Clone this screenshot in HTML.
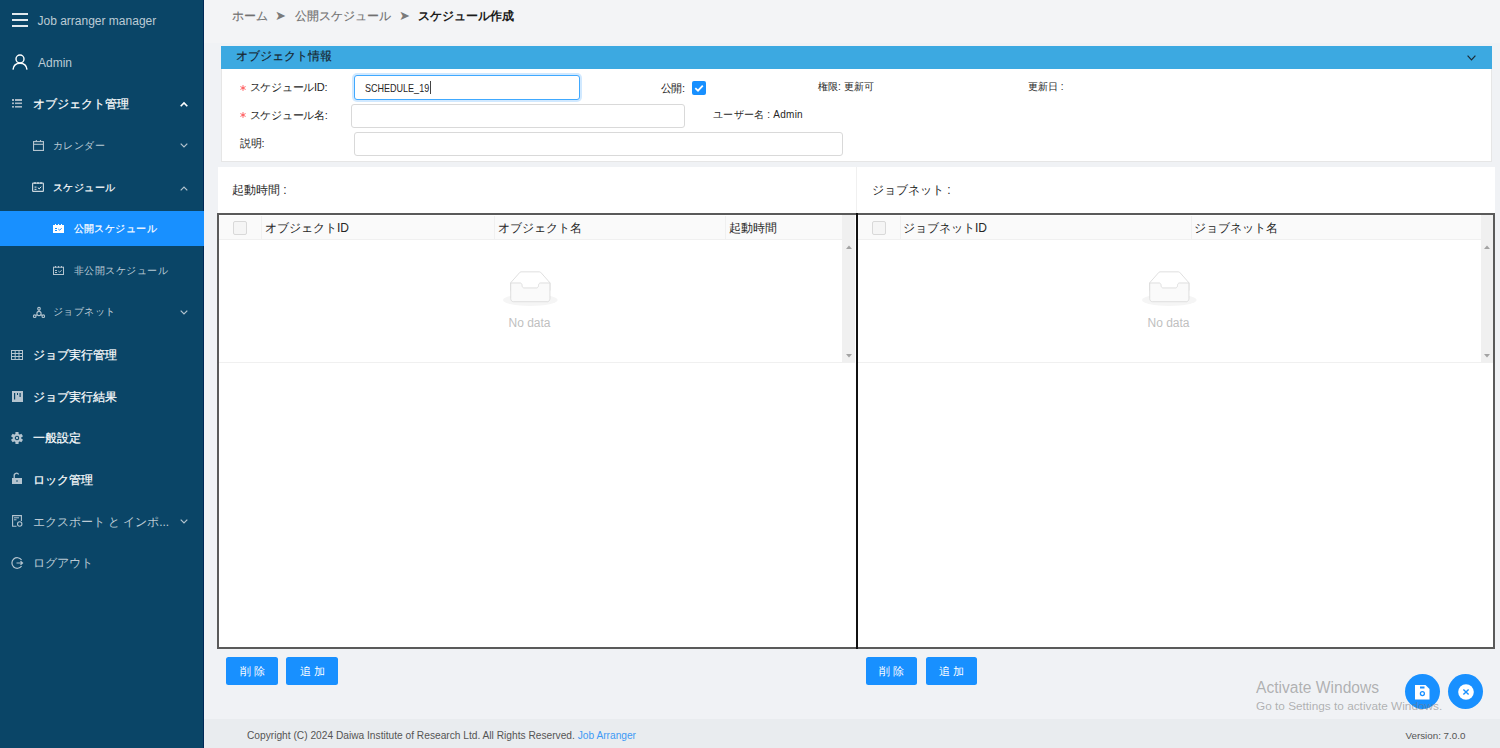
<!DOCTYPE html>
<html><head><meta charset="utf-8">
<style>
*{box-sizing:border-box}
html,body{margin:0;padding:0}
body{width:1500px;height:748px;overflow:hidden;position:relative;background:#f0f2f5;font-family:"Liberation Sans",sans-serif;color:#262626}
.a{position:absolute;white-space:nowrap;line-height:20px}
svg{position:absolute;overflow:visible}
#side{position:absolute;left:0;top:0;width:204px;height:748px;background:#0a4567;border-right:1px solid #002957}
.sw{color:#fff;-webkit-text-stroke:0.2px #fff}
.sg{color:#bccbd5}
.t12{font-size:12px}
.t11{font-size:10px;letter-spacing:0.45px}
#hdr{position:absolute;left:204px;top:0;width:1296px;height:43px;background:#f3f4f6}
#card{position:absolute;left:221px;top:46px;width:1270.5px;height:115.5px;background:#fff;border:1px solid #e6e6e6;border-top:none;border-radius:0}
#cardh{position:absolute;left:221px;top:46px;width:1270.5px;height:22.5px;background:#3ca9e1;border-radius:0}
.inp{position:absolute;background:#fff;border:1px solid #d9d9d9;border-radius:3px}
.lbl{font-size:11px;color:#262626;letter-spacing:-0.25px}
.lb2{font-size:10px;color:#262626}
.req{color:#f5222d;font-size:11px}
.panel{position:absolute;background:#fff}
.tbl{position:absolute;border:2px solid #5a5a5a}
.th{position:absolute;background:#fafafa}
.cb{position:absolute;width:14px;height:14px;border:1px solid #d9d9d9;background:#f5f5f5;border-radius:2px}
.vd{position:absolute;width:1px;background:#f0f0f0}
.sb{position:absolute;background:#f0f0f0}
.btn{position:absolute;top:657px;height:28px;background:#1890ff;border-radius:2.5px;color:#fff;font-size:11px;line-height:28px;text-align:center;letter-spacing:3px;text-indent:3px}
.nod{font-size:12px;color:#bfbfbf}
#foot{position:absolute;left:204px;top:718.5px;width:1296px;height:30px;background:#e9ecef}
.fab{position:absolute;width:35px;height:35px;border-radius:50%;background:#1890ff}
</style></head><body>

<div id="side"></div>
<!-- hamburger -->
<div style="position:absolute;left:12px;top:12.5px;width:16px;height:2px;background:#e2e9ee"></div>
<div style="position:absolute;left:12px;top:18.5px;width:16px;height:2px;background:#e2e9ee"></div>
<div style="position:absolute;left:12px;top:24.5px;width:16px;height:2px;background:#e2e9ee"></div>
<div class="a sg" style="left:37.5px;top:11px;font-size:12px">Job arranger manager</div>
<!-- admin -->
<svg style="left:12px;top:54px" width="16" height="16" viewBox="0 0 16 16"><circle cx="8" cy="5" r="4" fill="none" stroke="#fff" stroke-width="1.4"/><path d="M1 15.6 C1.5 11 4.5 9.3 8 9.3 C11.5 9.3 14.5 11 15 15.6" fill="none" stroke="#fff" stroke-width="1.4"/></svg>
<div class="a sg" style="left:38px;top:53px;font-size:12px">Admin</div>

<!-- object mgmt -->
<svg style="left:12px;top:99px" width="11" height="9" viewBox="0 0 11 9"><g fill="#a9b9c6"><rect x="0" y="0" width="2" height="2"/><rect x="3" y="0" width="7" height="2"/><rect x="0" y="3.5" width="2" height="1.6"/><rect x="3" y="3.5" width="7" height="1.6"/><rect x="0" y="7" width="2" height="1.6"/><rect x="3" y="7" width="7" height="1.6"/></g></svg>
<div class="a sw t12" style="left:32.5px;top:93.5px">オブジェクト管理</div>
<svg style="left:180px;top:102px" width="8" height="5" viewBox="0 0 8 5"><path d="M0.7 4.3 L4 1 L7.3 4.3" fill="none" stroke="#fff" stroke-width="1.6"/></svg>

<!-- calendar -->
<svg style="left:33px;top:140px" width="11" height="11" viewBox="0 0 11 11"><g fill="none" stroke="#b4c4cf" stroke-width="1.1"><rect x="0.55" y="1.6" width="9.9" height="8.85"/><line x1="0.5" y1="4.3" x2="10.5" y2="4.3"/><line x1="3.3" y1="0" x2="3.3" y2="2"/><line x1="7.5" y1="0" x2="7.5" y2="2"/></g></svg>
<div class="a sg t11" style="left:53px;top:135.5px">カレンダー</div>
<svg style="left:180px;top:142.5px" width="8" height="5" viewBox="0 0 8 5"><path d="M0.7 0.7 L4 4 L7.3 0.7" fill="none" stroke="#b4c4cf" stroke-width="1.2"/></svg>

<!-- schedule -->
<svg style="left:32px;top:182px" width="12" height="10" viewBox="0 0 12 10"><g fill="none" stroke="#c8d4dc" stroke-width="1.2"><rect x="0.6" y="1.2" width="10.8" height="8.2" rx="0.6"/></g><g fill="#e8eef2"><rect x="2.5" y="0" width="1" height="2"/><rect x="5.5" y="0" width="1" height="2"/><rect x="8.5" y="0" width="1" height="2"/><rect x="2.5" y="4.6" width="2" height="1"/><rect x="2.5" y="6.8" width="2" height="1"/></g><path d="M5.8 5.6 L7.2 6.9 L9.2 4.7" fill="none" stroke="#e8eef2" stroke-width="1"/></svg>
<div class="a sw t11" style="left:53px;top:177.5px">スケジュール</div>
<svg style="left:180px;top:186px" width="8" height="5" viewBox="0 0 8 5"><path d="M0.7 4.3 L4 1 L7.3 4.3" fill="none" stroke="#b4c4cf" stroke-width="1.2"/></svg>

<!-- selected -->
<div style="position:absolute;left:0;top:211px;width:204px;height:35px;background:#1890ff"></div>
<svg style="left:53px;top:224px" width="11" height="9" viewBox="0 0 11 9"><rect x="0" y="1" width="11" height="8" fill="#fff"/><g fill="#fff"><rect x="2" y="0" width="1" height="1.5"/><rect x="5" y="0" width="1" height="1.5"/><rect x="8" y="0" width="1" height="1.5"/></g><g fill="#1890ff"><rect x="2" y="4" width="2" height="1"/><rect x="2" y="6" width="2" height="1"/></g><path d="M5.3 5 L6.6 6.2 L8.6 4.2" fill="none" stroke="#1890ff" stroke-width="1"/></svg>
<div class="a sw t11" style="left:73.5px;top:218.5px">公開スケジュール</div>

<!-- private -->
<svg style="left:53px;top:266px" width="11" height="9" viewBox="0 0 11 9"><g fill="none" stroke="#b4c4cf" stroke-width="1"><rect x="0.5" y="1.2" width="10" height="7.3"/></g><g fill="#b4c4cf"><rect x="2" y="0" width="1" height="1.6"/><rect x="5" y="0" width="1" height="1.6"/><rect x="8" y="0" width="1" height="1.6"/><rect x="2" y="4" width="2" height="1"/><rect x="2" y="6" width="2" height="1"/></g><path d="M5.3 5 L6.6 6.2 L8.6 4.2" fill="none" stroke="#b4c4cf" stroke-width="1"/></svg>
<div class="a sg t11" style="left:74px;top:260.5px">非公開スケジュール</div>

<!-- jobnet -->
<svg style="left:32.5px;top:307px" width="12" height="11" viewBox="0 0 12 11"><g fill="none" stroke="#b4c4cf" stroke-width="1.1"><circle cx="6" cy="1.7" r="1.3"/><circle cx="6" cy="6.5" r="2.1"/><circle cx="1.7" cy="9.2" r="1.3"/><circle cx="10.3" cy="9.2" r="1.3"/><line x1="6" y1="3" x2="6" y2="4.4"/><line x1="2.8" y1="8.5" x2="4.2" y2="7.6"/><line x1="9.2" y1="8.5" x2="7.8" y2="7.6"/></g></svg>
<div class="a sg t11" style="left:53px;top:302px">ジョブネット</div>
<svg style="left:180px;top:309.5px" width="8" height="5" viewBox="0 0 8 5"><path d="M0.7 0.7 L4 4 L7.3 0.7" fill="none" stroke="#b4c4cf" stroke-width="1.2"/></svg>

<!-- job exec mgmt -->
<svg style="left:11px;top:349.5px" width="12" height="10" viewBox="0 0 12 10"><g fill="none" stroke="#b4c4cf" stroke-width="1"><rect x="0.5" y="0.5" width="11" height="9"/><line x1="4.2" y1="0" x2="4.2" y2="10"/><line x1="8" y1="0" x2="8" y2="10"/><line x1="0" y1="3.5" x2="12" y2="3.5"/><line x1="0" y1="6.5" x2="12" y2="6.5"/></g></svg>
<div class="a sw t12" style="left:33px;top:345px">ジョブ実行管理</div>

<!-- job exec result -->
<svg style="left:11.5px;top:390.5px" width="11" height="11" viewBox="0 0 11 11"><rect x="0" y="0" width="11" height="11" fill="#b4c4cf"/><rect x="2" y="2" width="1.2" height="6.5" fill="#0a4567"/><rect x="5" y="2" width="1" height="2" fill="#0a4567"/><rect x="7.5" y="2" width="1.2" height="4" fill="#0a4567"/></svg>
<div class="a sw t12" style="left:33px;top:387px">ジョブ実行結果</div>

<!-- general settings -->
<svg style="left:11px;top:431.5px" width="12" height="12" viewBox="0 0 12 12"><g fill="#b4c4cf" transform="translate(6 6)"><circle r="4.3"/><rect x="-1.6" y="-6" width="3.2" height="3" rx="0.6"/><rect x="-1.6" y="-6" width="3.2" height="3" rx="0.6" transform="rotate(60)"/><rect x="-1.6" y="-6" width="3.2" height="3" rx="0.6" transform="rotate(120)"/><rect x="-1.6" y="-6" width="3.2" height="3" rx="0.6" transform="rotate(180)"/><rect x="-1.6" y="-6" width="3.2" height="3" rx="0.6" transform="rotate(240)"/><rect x="-1.6" y="-6" width="3.2" height="3" rx="0.6" transform="rotate(300)"/></g><circle cx="6" cy="6" r="1.7" fill="none" stroke="#0a4567" stroke-width="1.1"/></svg>
<div class="a sw t12" style="left:33px;top:428px">一般設定</div>

<!-- lock -->
<svg style="left:12px;top:473px" width="10" height="11" viewBox="0 0 10 11"><path d="M2.2 5 V2.8 A2.3 2.3 0 0 1 6.6 1.6" fill="none" stroke="#b4c4cf" stroke-width="1.3"/><rect x="0" y="5" width="10" height="6" fill="#b4c4cf"/><circle cx="5" cy="8" r="0.8" fill="#0a4567"/></svg>
<div class="a sw t12" style="left:33px;top:470px">ロック管理</div>

<!-- export -->
<svg style="left:11.5px;top:515px" width="11" height="12" viewBox="0 0 11 12"><g fill="none" stroke="#b4c4cf" stroke-width="1.1"><path d="M4.5 11.3 H0.6 V0.6 H9.4 V6"/><circle cx="7.7" cy="9" r="2.2"/></g><g fill="#b4c4cf"><rect x="2" y="2.3" width="5" height="1"/><rect x="2" y="4.3" width="2.5" height="1"/></g></svg>
<div class="a sg t12" style="left:32.5px;top:511.5px">エクスポート と インポ...</div>
<svg style="left:180px;top:518.5px" width="8" height="5" viewBox="0 0 8 5"><path d="M0.7 0.7 L4 4 L7.3 0.7" fill="none" stroke="#b4c4cf" stroke-width="1.2"/></svg>

<!-- logout -->
<svg style="left:11px;top:556.5px" width="12" height="12" viewBox="0 0 12 12"><path d="M10.6 3 A5.3 5.3 0 1 0 10.6 9" fill="none" stroke="#b4c4cf" stroke-width="1.2"/><path d="M5.5 6 H11.5 M9.5 4.3 L11.5 6 L9.5 7.7" fill="none" stroke="#b4c4cf" stroke-width="1.2"/></svg>
<div class="a sg t12" style="left:32.5px;top:553px">ログアウト</div>

<!-- ===== main ===== -->
<div id="hdr"></div>
<div class="a" style="left:231.5px;top:5.5px;font-size:12px;color:#707070;-webkit-text-stroke:0.15px #707070">ホーム</div>
<div class="a" style="left:275px;top:5.5px;font-size:13px;color:#7a7a7a">&#x27A4;</div>
<div class="a" style="left:294.5px;top:5.5px;font-size:12px;color:#707070;-webkit-text-stroke:0.15px #707070">公開スケジュール</div>
<div class="a" style="left:398.5px;top:5.5px;font-size:13px;color:#7a7a7a">&#x27A4;</div>
<div class="a" style="left:418px;top:5.5px;font-size:12px;color:#1a1a1a;font-weight:bold">スケジュール作成</div>

<div id="card"></div>
<div id="cardh"></div>
<div class="a" style="left:236px;top:45.5px;font-size:12px;color:#17242e;-webkit-text-stroke:0.15px #17242e">オブジェクト情報</div>
<svg style="left:1467px;top:55px" width="9" height="6" viewBox="0 0 9 6"><path d="M0.6 0.6 L4.5 4.8 L8.4 0.6" fill="none" stroke="#1c2a35" stroke-width="1.2"/></svg>

<svg style="left:240px;top:84.5px" width="6" height="6" viewBox="-3 -3 6 6"><g stroke="#ff4d4f" stroke-width="0.85"><line x1="0" y1="-2.9" x2="0" y2="2.9"/><line x1="-2.6" y1="-1.45" x2="2.6" y2="1.45"/><line x1="-2.6" y1="1.45" x2="2.6" y2="-1.45"/></g></svg>
<div class="a lbl" style="left:249.5px;top:77px">スケジュールID:</div>
<svg style="left:240px;top:112.2px" width="6" height="6" viewBox="-3 -3 6 6"><g stroke="#ff4d4f" stroke-width="0.85"><line x1="0" y1="-2.9" x2="0" y2="2.9"/><line x1="-2.6" y1="-1.45" x2="2.6" y2="1.45"/><line x1="-2.6" y1="1.45" x2="2.6" y2="-1.45"/></g></svg>
<div class="a lbl" style="left:249.5px;top:105px">スケジュール名:</div>
<div class="a lbl" style="left:240px;top:132.5px">説明:</div>

<div class="inp" style="left:354px;top:75px;width:226px;height:25px;border-color:#40a9ff;box-shadow:0 0 0 2px rgba(24,144,255,0.2)"></div>
<div class="a" style="left:364.5px;top:77.5px;font-size:11px;transform:scaleX(0.82);transform-origin:0 0;color:#262626">SCHEDULE_19</div>
<div style="position:absolute;left:429.5px;top:81px;width:1px;height:12.5px;background:#444"></div>
<div class="inp" style="left:351px;top:103.5px;width:334px;height:24px"></div>
<div class="inp" style="left:354px;top:131.5px;width:489px;height:24px"></div>

<div class="a lbl" style="left:660.5px;top:77.5px">公開:</div>
<div style="position:absolute;left:692px;top:81px;width:14px;height:14px;background:#1890ff;border-radius:2px"></div>
<svg style="left:692px;top:81px" width="14" height="14" viewBox="0 0 14 14"><path d="M3.3 7.2 L6 9.7 L10.8 4.6" fill="none" stroke="#fff" stroke-width="1.8"/></svg>
<div class="a lb2" style="left:818px;top:77px">権限: 更新可</div>
<div class="a lb2" style="left:713px;top:104.5px;letter-spacing:0.25px">ユーザー名 : Admin</div>
<div class="a lb2" style="left:1028px;top:77px">更新日 :</div>

<!-- panels -->
<div class="panel" style="left:218px;top:167px;width:639px;height:481px"></div>
<div class="panel" style="left:857px;top:167px;width:638px;height:481px"></div>
<div class="vd" style="left:856px;top:167px;height:46px"></div>
<div class="a" style="left:232px;top:180px;font-size:12px">起動時間 :</div>
<div class="a" style="left:872px;top:180px;font-size:12px">ジョブネット :</div>

<div class="tbl" style="left:217px;top:213px;width:641px;height:436px"></div>
<div class="tbl" style="left:856px;top:213px;width:639px;height:436px"></div>
<div style="position:absolute;left:856px;top:213px;width:2px;height:436px;background:#111"></div>

<!-- left table -->
<div class="th" style="left:219px;top:216px;width:624px;height:23px"></div>
<div class="sb" style="left:842px;top:215px;width:13px;height:148px"></div>
<div style="position:absolute;left:219px;top:362px;width:636px;height:1px;background:#f0f0f0"></div>
<div style="position:absolute;left:219px;top:239px;width:624px;height:1px;background:#f0f0f0"></div>
<div class="cb" style="left:232.5px;top:220.5px"></div>
<div class="vd" style="left:261px;top:216px;height:23px"></div>
<div class="vd" style="left:494px;top:216px;height:23px"></div>
<div class="vd" style="left:725px;top:216px;height:23px"></div>
<div class="a t12" style="left:265px;top:218px;color:#262626">オブジェクトID</div>
<div class="a t12" style="left:497.5px;top:218px;color:#262626">オブジェクト名</div>
<div class="a t12" style="left:729px;top:218px;color:#262626">起動時間</div>
<svg style="left:846px;top:245px" width="6" height="4" viewBox="0 0 6 4"><path d="M0 4 L3 0.5 L6 4Z" fill="#a3a3a3"/></svg>
<svg style="left:846px;top:354px" width="6" height="4" viewBox="0 0 6 4"><path d="M0 0 L3 3.5 L6 0Z" fill="#a3a3a3"/></svg>
<svg style="left:502.7px;top:271px" width="54.6" height="35" viewBox="0 0 64 41"><g transform="translate(0 1)" fill="none" fill-rule="evenodd"><ellipse fill="#f5f5f5" cx="32" cy="33" rx="32" ry="7"/><g fill-rule="nonzero" stroke="#d9d9d9"><path d="M55 12.76L44.854 1.258C44.367.474 43.656 0 42.907 0H21.093c-.749 0-1.46.474-1.947 1.257L9 12.761V22h46v-9.24z"/><path d="M41.613 15.931c0-1.605.994-2.93 2.227-2.931H55v18.137C55 33.26 53.68 35 52.05 35h-40.1C10.32 35 9 33.259 9 31.137V13h11.16c1.233 0 2.227 1.323 2.227 2.928v.022c0 1.605 1.005 2.901 2.237 2.901h14.752c1.232 0 2.237-1.308 2.237-2.913v-.007z" fill="#fafafa"/></g></g></svg>
<div class="a nod" style="left:508.5px;top:312.5px">No data</div>

<!-- right table -->
<div class="th" style="left:858px;top:216px;width:623px;height:23px"></div>
<div class="sb" style="left:1481px;top:215px;width:12px;height:148px"></div>
<div style="position:absolute;left:858px;top:362px;width:635px;height:1px;background:#f0f0f0"></div>
<div style="position:absolute;left:858px;top:239px;width:623px;height:1px;background:#f0f0f0"></div>
<div class="cb" style="left:872px;top:220.5px"></div>
<div class="vd" style="left:900px;top:216px;height:23px"></div>
<div class="vd" style="left:1191px;top:216px;height:23px"></div>
<div class="a t12" style="left:903px;top:218px;color:#262626">ジョブネットID</div>
<div class="a t12" style="left:1194px;top:218px;color:#262626">ジョブネット名</div>
<svg style="left:1484px;top:245px" width="6" height="4" viewBox="0 0 6 4"><path d="M0 4 L3 0.5 L6 4Z" fill="#a3a3a3"/></svg>
<svg style="left:1484px;top:354px" width="6" height="4" viewBox="0 0 6 4"><path d="M0 0 L3 3.5 L6 0Z" fill="#a3a3a3"/></svg>
<svg style="left:1141.7px;top:271px" width="54.6" height="35" viewBox="0 0 64 41"><g transform="translate(0 1)" fill="none" fill-rule="evenodd"><ellipse fill="#f5f5f5" cx="32" cy="33" rx="32" ry="7"/><g fill-rule="nonzero" stroke="#d9d9d9"><path d="M55 12.76L44.854 1.258C44.367.474 43.656 0 42.907 0H21.093c-.749 0-1.46.474-1.947 1.257L9 12.761V22h46v-9.24z"/><path d="M41.613 15.931c0-1.605.994-2.93 2.227-2.931H55v18.137C55 33.26 53.68 35 52.05 35h-40.1C10.32 35 9 33.259 9 31.137V13h11.16c1.233 0 2.227 1.323 2.227 2.928v.022c0 1.605 1.005 2.901 2.237 2.901h14.752c1.232 0 2.237-1.308 2.237-2.913v-.007z" fill="#fafafa"/></g></g></svg>
<div class="a nod" style="left:1147.5px;top:312.5px">No data</div>

<!-- buttons -->
<div class="btn" style="left:226px;width:52px">削除</div>
<div class="btn" style="left:286px;width:52px">追加</div>
<div class="btn" style="left:866px;width:51px">削除</div>
<div class="btn" style="left:926px;width:51px">追加</div>

<!-- footer -->
<div id="foot"></div>
<div class="a" style="left:247px;top:725.5px;font-size:10.2px;color:#555">Copyright (C) 2024 Daiwa Institute of Research Ltd. All Rights Reserved. <span style="color:#3e9af5">Job Arranger</span></div>
<div class="a" style="left:1405.5px;top:725.5px;font-size:9.8px;color:#555">Version: 7.0.0</div>

<!-- fabs -->
<div class="fab" style="left:1405px;top:674px"></div>
<svg style="left:1415px;top:684.5px" width="15" height="15" viewBox="0 0 15 15"><path d="M0 0 H10.5 L14.5 4 V14.5 H0 Z" fill="#fff"/><rect x="5" y="1.5" width="4.5" height="2" fill="#1890ff"/><circle cx="7.4" cy="8.6" r="2" fill="none" stroke="#1890ff" stroke-width="1.3"/></svg>
<div class="fab" style="left:1448px;top:674px"></div>
<svg style="left:1457.8px;top:684px" width="16" height="16" viewBox="0 0 16 16"><circle cx="8" cy="8" r="7.8" fill="#fff"/><path d="M5.4 5.4 L10.6 10.6 M10.6 5.4 L5.4 10.6" stroke="#1890ff" stroke-width="1.4"/></svg>

<!-- watermark -->
<div class="a" style="left:1256px;top:677.5px;font-size:15.6px;color:rgba(120,120,120,0.55)">Activate Windows</div>
<div class="a" style="left:1256px;top:695.5px;font-size:11.8px;color:rgba(120,120,120,0.55)">Go to Settings to activate Windows.</div>

</body></html>
